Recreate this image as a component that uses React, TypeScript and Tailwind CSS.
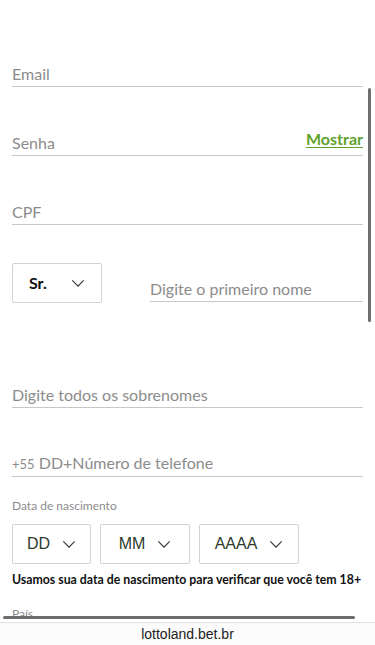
import React from "react";

function Chevron({ className = "" }: { className?: string }) {
  return (
    <svg viewBox="0 0 16 10" className={className} fill="none" stroke="currentColor" strokeWidth="1.3">
      <path d="M1.5 1.5 8 8l6.5-6.5" />
    </svg>
  );
}

function Field({ label, className = "", children }: { label: React.ReactNode; className?: string; children?: React.ReactNode }) {
  return (
    <div className={"flex items-end justify-between border-b border-[#c8c8c8] " + className}>
      <span className="text-[16px] leading-6 text-[#8c8c8c]">{label}</span>
      {children}
    </div>
  );
}

function DateSelect({ label, className }: { label: string; className: string }) {
  return (
    <div className={"flex h-[40px] items-center justify-center gap-3 rounded-[2px] border border-[#d2d2d2] " + className}>
      <span className="text-[16px] font-light text-[#2e3a2e] [font-family:'Liberation_Sans',sans-serif]">{label}</span>
      <Chevron className="w-[14px] h-[9px] text-[#333]" />
    </div>
  );
}

export default function App() {
  return (
    <div className="relative h-[645px] w-[375px] overflow-hidden bg-white [font-family:Lato,sans-serif]">
      <div className="px-3 pt-[62px]">
        <Field label="Email" />
        <Field label="Senha" className="mt-[42px]">
          <span className="mb-[6px] text-[16px] font-bold leading-5 text-[#5fa22d] underline underline-offset-2">Mostrar</span>
        </Field>
        <Field label="CPF" className="mt-[44px]" />

        <div className="mt-[38px] flex items-start gap-12">
          <div className="flex h-[40px] w-[90px] shrink-0 items-center justify-between rounded-[2px] border border-[#d2d2d2] pl-4 pr-4">
            <span className="text-[16px] font-bold text-[#111]">Sr.</span>
            <Chevron className="w-[14px] h-[9px] text-[#333]" />
          </div>
          <Field label="Digite o primeiro nome" className="mt-[14px] flex-1" />
        </div>

        <Field label="Digite todos os sobrenomes" className="mt-[80px]" />
        <Field
          label={
            <>
              <span className="text-[13px]">+55</span> DD+Número de telefone
            </>
          }
          className="mt-[43px]"
        />

        <p className="mt-[21px] text-[12px] leading-4 text-[#8c8c8c]">Data de nascimento</p>
        <div className="mt-[10px] flex gap-[9px]">
          <DateSelect label="DD" className="w-[79px]" />
          <DateSelect label="MM" className="w-[90px]" />
          <DateSelect label="AAAA" className="w-[100px]" />
        </div>
        <p className="mt-[8px] whitespace-nowrap text-[12.3px] font-bold leading-4 text-[#111]">
          Usamos sua data de nascimento para verificar que você tem 18+
        </p>
        <p className="mt-[18px] text-[12px] leading-4 text-[#8c8c8c]">País</p>
      </div>

      {/* scroll indicators */}
      <div className="absolute right-[4px] top-[88px] h-[234px] w-[3px] rounded-full bg-[#6e6e6e]" />
      <div className="absolute left-[3px] top-[616px] h-[3px] w-[352px] rounded-full bg-[#6e6e6e]" />

      <div className="absolute bottom-0 left-0 right-0 flex h-[23px] items-center justify-center border-t border-[#e2e2e2] bg-[#fbfbfb]">
        <span className="text-[14px] text-[#222] [font-family:'Liberation_Sans',sans-serif]">lottoland.bet.br</span>
      </div>
    </div>
  );
}
